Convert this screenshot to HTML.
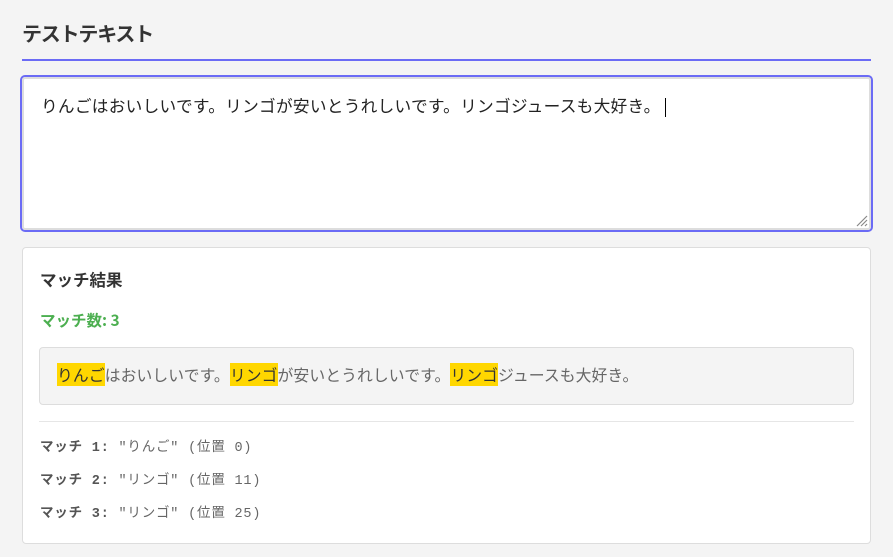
<!DOCTYPE html>
<html><head><meta charset="utf-8"><style>
body{margin:0;background:#f4f4f4;width:893px;height:557px;overflow:hidden;font-family:"Liberation Sans","Noto Sans CJK JP",sans-serif;}
h1{position:absolute;left:22px;top:18px;margin:0;font-size:20px;font-weight:bold;color:#333;letter-spacing:-1.2px;font-family:"Noto Sans CJK JP",sans-serif}
.line{position:absolute;left:22px;top:59px;width:849px;height:2px;background:#6b6bf5}
.ta{position:absolute;left:20px;top:75px;width:849px;height:153px;border:2px solid #6b6bf5;border-radius:5px;background:#fff}
.ta .in{position:absolute;inset:0;border:2px solid #ddd;border-radius:3px}
.ta .t{position:absolute;left:19px;top:16px;font-size:16.7px;letter-spacing:0.25px;color:#222;white-space:nowrap;font-family:"Noto Sans CJK JP",sans-serif}
.cur{display:inline-block;width:1px;height:19px;background:#000;vertical-align:middle;margin-left:4px}
.card{position:absolute;left:22px;top:247px;width:847px;height:295px;background:#fff;border:1px solid #ddd;border-radius:4px}
.h2{position:absolute;left:17px;top:19px;font-size:16.5px;font-weight:bold;color:#333;font-family:"Noto Sans CJK JP",sans-serif}
.cnt{position:absolute;left:17px;top:61px;font-size:15.5px;font-weight:bold;color:#4caf50;font-family:"Noto Sans CJK JP",sans-serif}
.box{position:absolute;left:16px;top:99px;width:813px;height:56px;background:#f4f4f4;border:1px solid #ddd;border-radius:4px}
.box .t{position:absolute;left:17px;top:15px;font-size:15.8px;letter-spacing:0.1px;color:#666;white-space:nowrap;font-family:"Noto Sans CJK JP",sans-serif}
mark{background:#ffd700;color:#333}
.hr{position:absolute;left:16px;top:173px;width:815px;height:1px;background:#e6e6e6}
.m{position:absolute;left:17px;font-size:13.5px;letter-spacing:0.8px;color:#666;font-family:"Liberation Mono","Noto Sans CJK JP",monospace;white-space:nowrap}
.m b{color:#555}
</style></head><body>
<h1>テストテキスト</h1>
<div class="line"></div>
<div class="ta"><div class="in"></div><div class="t">りんごはおいしいです。リンゴが安いとうれしいです。リンゴジュースも大好き。<span class="cur"></span></div>
<svg style="position:absolute;right:3px;bottom:3px" width="12" height="12"><path d="M11 1L1 11M11 5L5 11M11 9L9 11" stroke="#888" stroke-width="1.2"/></svg></div>
<div class="card">
<div class="h2">マッチ結果</div>
<div class="cnt">マッチ数: 3</div>
<div class="box"><div class="t"><mark>りんご</mark>はおいしいです。<mark>リンゴ</mark>が安いとうれしいです。<mark>リンゴ</mark>ジュースも大好き。</div></div>
<div class="hr"></div>
<div class="m" style="top:187px"><b>マッチ 1:</b> "りんご" (位置 0)</div>
<div class="m" style="top:220px"><b>マッチ 2:</b> "リンゴ" (位置 11)</div>
<div class="m" style="top:253px"><b>マッチ 3:</b> "リンゴ" (位置 25)</div>
</div>
</body></html>
